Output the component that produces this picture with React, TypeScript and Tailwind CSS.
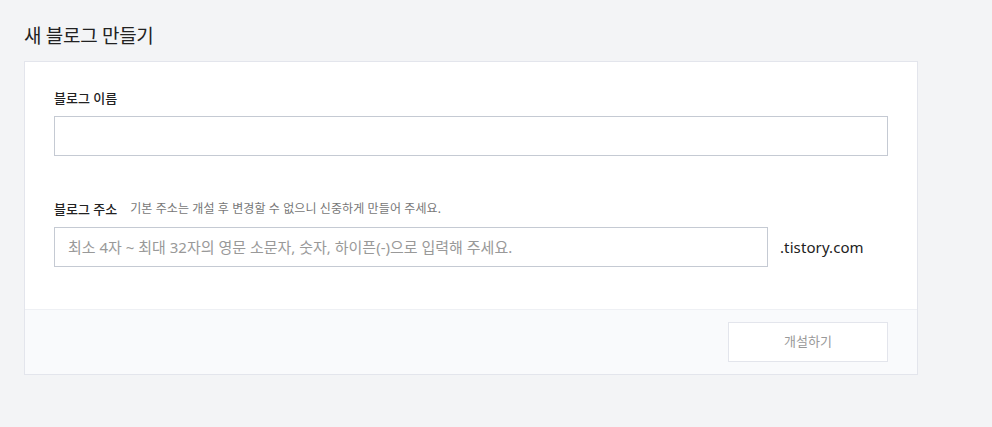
import React from "react";

export default function App() {
  const font = { fontFamily: '"Noto Sans", "Noto Sans CJK KR", sans-serif' };
  return (
    <div className="min-h-[427px] w-full bg-[#f3f4f6] text-[#222]" style={font}>
      <div className="pl-[24px] pt-[22px]">
        <h1 className="text-[19px] leading-[28px] font-normal text-[#222] tracking-[-0.3px]">새 블로그 만들기</h1>
        <div className="mt-[11px] w-[894px] border border-[#e3e5ec] bg-white">
          <div className="px-[29px] pt-[27px] pb-[42px]">
            <label className="block text-[13px] leading-[18px] font-medium text-[#222]">블로그 이름</label>
            <input
              type="text"
              className="mt-[9px] block h-[40px] w-full border border-[#c5cad3] bg-white px-[14px] text-[15px] outline-none"
            />
            <div className="mt-[44px] flex items-center text-[13px] leading-[18px]">
              <span className="font-medium text-[#222]">블로그 주소</span>
              <span className="ml-[13px] text-[12px] tracking-[0.1px] text-[#777]">기본 주소는 개설 후 변경할 수 없으니 신중하게 만들어 주세요.</span>
            </div>
            <div className="mt-[9px] flex items-center">
              <input
                type="text"
                placeholder="최소 4자 ~ 최대 32자의 영문 소문자, 숫자, 하이픈(-)으로 입력해 주세요."
                className="block h-[40px] w-[714px] border border-[#c5cad3] bg-white px-[13px] text-[15px] text-[#222] placeholder:text-[#999] outline-none"
              />
              <span className="ml-[12px] text-[15px] tracking-[0.1px] text-[#222]">.tistory.com</span>
            </div>
          </div>
          <div className="flex justify-end border-t border-[#eef0f4] bg-[#f9fafc] px-[29px] pt-[12px] pb-[12px]">
            <button className="h-[40px] w-[160px] border border-[#e3e5ec] bg-white text-[13px] text-[#999]">개설하기</button>
          </div>
        </div>
      </div>
    </div>
  );
}
